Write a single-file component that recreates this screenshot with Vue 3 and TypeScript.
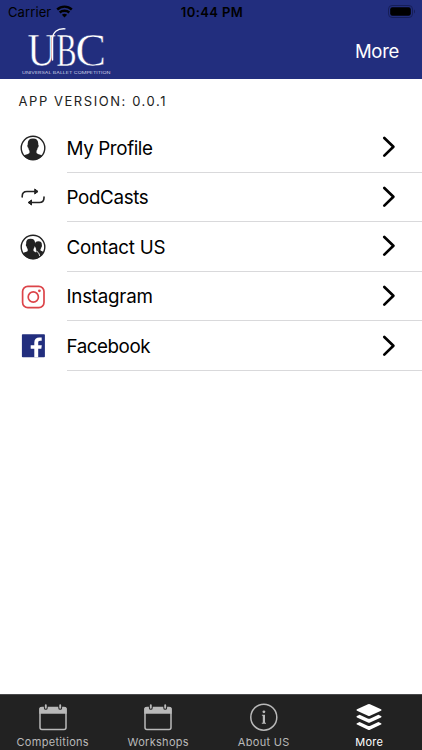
<script setup lang="ts">
interface Row {
  label: string
  icon: 'profile' | 'repeat' | 'contacts' | 'instagram' | 'facebook'
  tracking: number
}

interface Tab {
  label: string
  icon: 'calendar' | 'info' | 'layers'
  active?: boolean
}

const rows: Row[] = [
  { label: 'My Profile', icon: 'profile', tracking: -0.38 },
  { label: 'PodCasts', icon: 'repeat', tracking: -0.35 },
  { label: 'Contact US', icon: 'contacts', tracking: -0.22 },
  { label: 'Instagram', icon: 'instagram', tracking: -0.25 },
  { label: 'Facebook', icon: 'facebook', tracking: -0.45 },
]

const tabs: Tab[] = [
  { label: 'Competitions', icon: 'calendar' },
  { label: 'Workshops', icon: 'calendar' },
  { label: 'About US', icon: 'info' },
  { label: 'More', icon: 'layers', active: true },
]
</script>

<template>
  <div class="screen">
    <header class="header">
      <div class="status">
        <div class="carrier">
          <span>Carrier</span>
          <svg class="wifi" width="17" height="13" viewBox="0 0 17 13">
            <path d="M1.2 4.5C5.3.7 11.7.7 15.8 4.5" fill="none" stroke="#000" stroke-width="2.4" />
            <path d="M3.7 7.5c2.7-2.4 6.900-2.400 9.600 0" fill="none" stroke="#000" stroke-width="2.4" />
            <path d="M5.9 9.700c1.500-1.300 3.700-1.300 5.200 0L8.500 12.500z" fill="#000" />
          </svg>
        </div>
        <span class="clock">10:44 PM</span>
        <svg class="battery" width="28" height="13" viewBox="0 0 28 13">
          <rect x=".5" y=".5" width="24" height="12" rx="3.6" fill="none" stroke="#161e58" />
          <rect x="2.2" y="2.2" width="20.6" height="8.6" rx="2.2" fill="#000" />
          <path d="M26 4.5c1.3.5 1.3 3.5 0 4z" fill="#161e58" />
        </svg>
      </div>
      <div class="navbar">
        <svg class="logo" width="92" height="50" viewBox="21 26 92 50">
          <g fill="#fff" font-family="'Liberation Serif', serif" font-size="45.500" stroke="#222e7e" stroke-width=".4">
            <text x="27.500" y="65.800" textLength="28.500" lengthAdjust="spacingAndGlyphs">U</text>
            <text x="56.500" y="65.800" textLength="20" lengthAdjust="spacingAndGlyphs">B</text>
            <text x="75.500" y="65.800" textLength="30.500" lengthAdjust="spacingAndGlyphs">C</text>
          </g>
          <path d="M52.600 60V39c0-6.500 4.500-10.800 12.400-10.200" fill="none" stroke="#fff" stroke-width="1.300" stroke-linecap="round" />
          <text x="22" y="73.600" fill="#c9cce4" font-family="Inter, sans-serif" font-size="3.900" textLength="88.500" lengthAdjust="spacingAndGlyphs">UNIVERSAL BALLET COMPETITION</text>
        </svg>
        <span class="title">More</span>
      </div>
    </header>

    <main class="content">
      <div class="version">APP VERSION: 0.0.1</div>
      <div v-for="row in rows" :key="row.label" class="row">
        <div class="row-icon">
          <svg v-if="row.icon === 'profile'" width="26" height="26" viewBox="0 0 26 26">
            <circle cx="13" cy="13" r="11.800" fill="#fff" stroke="#222" stroke-width="1.400" />
            <path d="M13 3.600c3.900 0 5.600 2.300 5.200 6 .8.500.5 2.600-.5 3.200-.3 1.600-.7 2.400-1.200 3v2c.5 1.300 3.700 1.500 5.600 3.100A12 12 0 0 1 3.900 20.900c1.900-1.600 5.100-1.800 5.600-3.100v-2c-.5-.6-.9-1.400-1.200-3-1-.6-1.300-2.700-.5-3.200-.4-3.700 1.300-6 5.200-6z" fill="#222" />
          </svg>
          <svg v-else-if="row.icon === 'repeat'" width="26" height="26" viewBox="0 0 26 26" fill="none" stroke="#222" stroke-width="1.600" stroke-linecap="round" stroke-linejoin="round">
            <path d="M2.200 13v-.8c0-3 1.700-4.700 4.700-4.700h10.400" />
            <path d="M15 5.200l3 2.300-3 2.300z" fill="#222" stroke-width="1" />
            <path d="M24 13v.8c0 3-1.700 4.700-4.700 4.700H8.900" />
            <path d="M11.200 16.200l-3 2.300 3 2.300z" fill="#222" stroke-width="1" />
          </svg>
          <svg v-else-if="row.icon === 'contacts'" width="26" height="26" viewBox="0 0 26 26">
            <circle cx="13" cy="13" r="11.800" fill="#fff" stroke="#222" stroke-width="1.400" />
            <path d="M18.400 7.200c2.600 0 3.700 1.500 3.400 4 .4.400.2 1.600-.4 2-.2 1-.5 1.500-.9 1.900v1.100c.2.700 1.800 1 3.200 1.700A12 12 0 0 1 17 24.300l-1.300-8.300c.3-.2.600-.4.600-.9-.4-.4-.7-1-.9-1.900-.6-.4-.8-1.600-.4-2-.3-2.500.8-4 3.400-4z" fill="#222" />
            <path d="M10.600 4.700c3.400 0 4.800 2 4.400 5.200.7.500.4 2.200-.4 2.700-.2 1.300-.6 2-1.100 2.500v1.700c.4 1.400 4.900 1.300 5.300 5.300l-.4 1.800A12 12 0 0 1 2.700 19.400c1.500-1.400 4.700-1.200 5-2.600v-1.700c-.5-.5-.9-1.200-1.100-2.500-.8-.5-1.100-2.200-.4-2.700-.4-3.200 1-5.200 4.400-5.200z" fill="#222" />
            <path d="M14.600 16.200c1.700 1 4.400 1.500 4.900 5.200" fill="none" stroke="#fff" stroke-width="1" stroke-linecap="round" />
          </svg>
          <svg v-else-if="row.icon === 'instagram'" width="26" height="26" viewBox="0 0 26 26" fill="none" stroke="#dc4449">
            <rect x="2.600" y="2.300" width="21.400" height="21.400" rx="5.200" stroke-width="1.700" />
            <circle cx="13.300" cy="13" r="5.100" stroke-width="1.700" />
            <circle cx="19.400" cy="6.800" r="1.400" fill="#dc4449" stroke="none" />
          </svg>
          <svg v-else width="26" height="26" viewBox="0 0 26 26">
            <rect x="1.900" y="1.300" width="23" height="23" rx=".8" fill="#222e7e" />
            <path d="M14.300 24.300v-8.600h-3.600v-3.500h3.600V9.500c0-3.400 2-5.100 5-5.100l2.400.1v3.200h-1.600c-1.600 0-1.900.8-1.900 1.900v2.600h3.600l-.5 3.500h-3.100v8.600z" fill="#fff" />
          </svg>
        </div>
        <div class="row-body">
          <span class="label" :style="{ letterSpacing: row.tracking + 'px' }">{{ row.label }}</span>
          <svg class="chevron" width="14" height="22" viewBox="0 0 14 22">
            <path d="M2.300 2 11.400 10.800l-9.100 8.800" fill="none" stroke="#000" stroke-width="2.700" stroke-linecap="round" stroke-linejoin="round" />
          </svg>
        </div>
      </div>
    </main>

    <nav class="tabs">
      <div v-for="tab in tabs" :key="tab.label" class="tab" :class="{ active: tab.active }">
        <svg v-if="tab.icon === 'calendar'" width="30" height="30" viewBox="0 0 30 30">
          <rect x="2" y="5.500" width="26" height="22" rx="2" fill="none" stroke="currentColor" stroke-width="1.500" />
          <path d="M1.300 11.700V7c0-1.200.8-2 2-2h23.400c1.200 0 2 .8 2 2v4.700z" fill="currentColor" />
          <path d="M7.800 3.200v2.700M22.200 3.200v2.700" stroke="#222" stroke-width="3.800" stroke-linecap="round" />
          <path d="M7.800 3.200v2.600M22.200 3.200v2.600" stroke="currentColor" stroke-width="1.900" stroke-linecap="round" />
        </svg>
        <svg v-else-if="tab.icon === 'info'" width="30" height="30" viewBox="0 0 30 30">
          <circle cx="14.800" cy="15.200" r="13" fill="none" stroke="currentColor" stroke-width="1.500" />
          <circle cx="14.900" cy="9.800" r="1.400" fill="currentColor" />
          <path d="M12.900 12.700H16v8.100h1v.9h-4.200v-.9h1v-7.100h-.9z" fill="currentColor" />
        </svg>
        <svg v-else width="30" height="30" viewBox="0 0 30 30" fill="currentColor">
          <path d="M14 2.200q1-.4 2 0l11 5.100q1.300.7 0 1.400l-11 5.100q-1 .4-2 0L3 8.700q-1.300-.7 0-1.400z" />
          <path d="m3 14 2.600-1.200 8 3.700q1.400.6 2.800 0l8-3.700L27 14q1.300.7 0 1.400l-11 5.100q-1 .4-2 0L3 15.400q-1.300-.7 0-1.400z" />
          <path d="m3 21.200 2.600-1.200 8 3.700q1.400.6 2.800 0l8-3.700 2.600 1.200q1.300.7 0 1.400l-11 5.100q-1 .4-2 0L3 22.600q-1.300-.7 0-1.400z" />
        </svg>
        <span class="tab-label">{{ tab.label }}</span>
      </div>
    </nav>
  </div>
</template>

<style>
body {
  margin: 0;
}
</style>

<style scoped>
.screen {
  display: flex;
  flex-direction: column;
  width: 422px;
  height: 750px;
  overflow: hidden;
  background: #fff;
  color: #000;
  font-family: Inter, 'Liberation Sans', sans-serif;
}

.header {
  height: 79px;
  flex: none;
  background: #222e7e;
}

.status {
  display: grid;
  grid-template-columns: 1fr auto 1fr;
  align-items: center;
  height: 23px;
  padding: 0 6px 0 8px;
  font-size: 13px;
}

.carrier {
  display: flex;
  align-items: center;
  gap: 5px;
  letter-spacing: 0.1px;
}

.clock {
  font-weight: 600;
  letter-spacing: 0.4px;
}

.battery {
  justify-self: end;
}

.navbar {
  display: flex;
  justify-content: space-between;
  height: 56px;
  padding: 0 23px 0 21px;
}

.logo {
  margin-top: 3px;
}

.title {
  color: #fff;
  font-size: 18.5px;
  line-height: 57px;
  letter-spacing: -0.3px;
}

.content {
  flex: 1;
}

.version {
  height: 44px;
  padding-left: 18.5px;
  font-size: 13px;
  line-height: 44px;
  letter-spacing: 1.56px;
  color: #222;
}

.row {
  display: flex;
  height: 49.6px;
}

.row-icon {
  display: flex;
  align-items: center;
  width: 46px;
  padding-left: 20px;
}

.row-body {
  display: flex;
  flex: 1;
  align-items: center;
  justify-content: space-between;
  padding-right: 26px;
  margin-left: 0.5px;
  border-bottom: 1px solid #d9d9db;
  font-size: 18.8px;
}

.label {
  padding-top: 1.5px;
}

.tabs {
  display: grid;
  grid-template-columns: repeat(4, 1fr);
  flex: none;
  height: 56px;
  box-sizing: border-box;
  border-top: 1px solid #49494b;
  background: #222;
}

.tab {
  display: flex;
  flex-direction: column;
  align-items: center;
  gap: 2px;
  padding-top: 7px;
  color: #b9b9b9;
  font-size: 11px;
  line-height: 16px;
  letter-spacing: 0.3px;
}

.tab.active {
  color: #fff;
}
</style>
